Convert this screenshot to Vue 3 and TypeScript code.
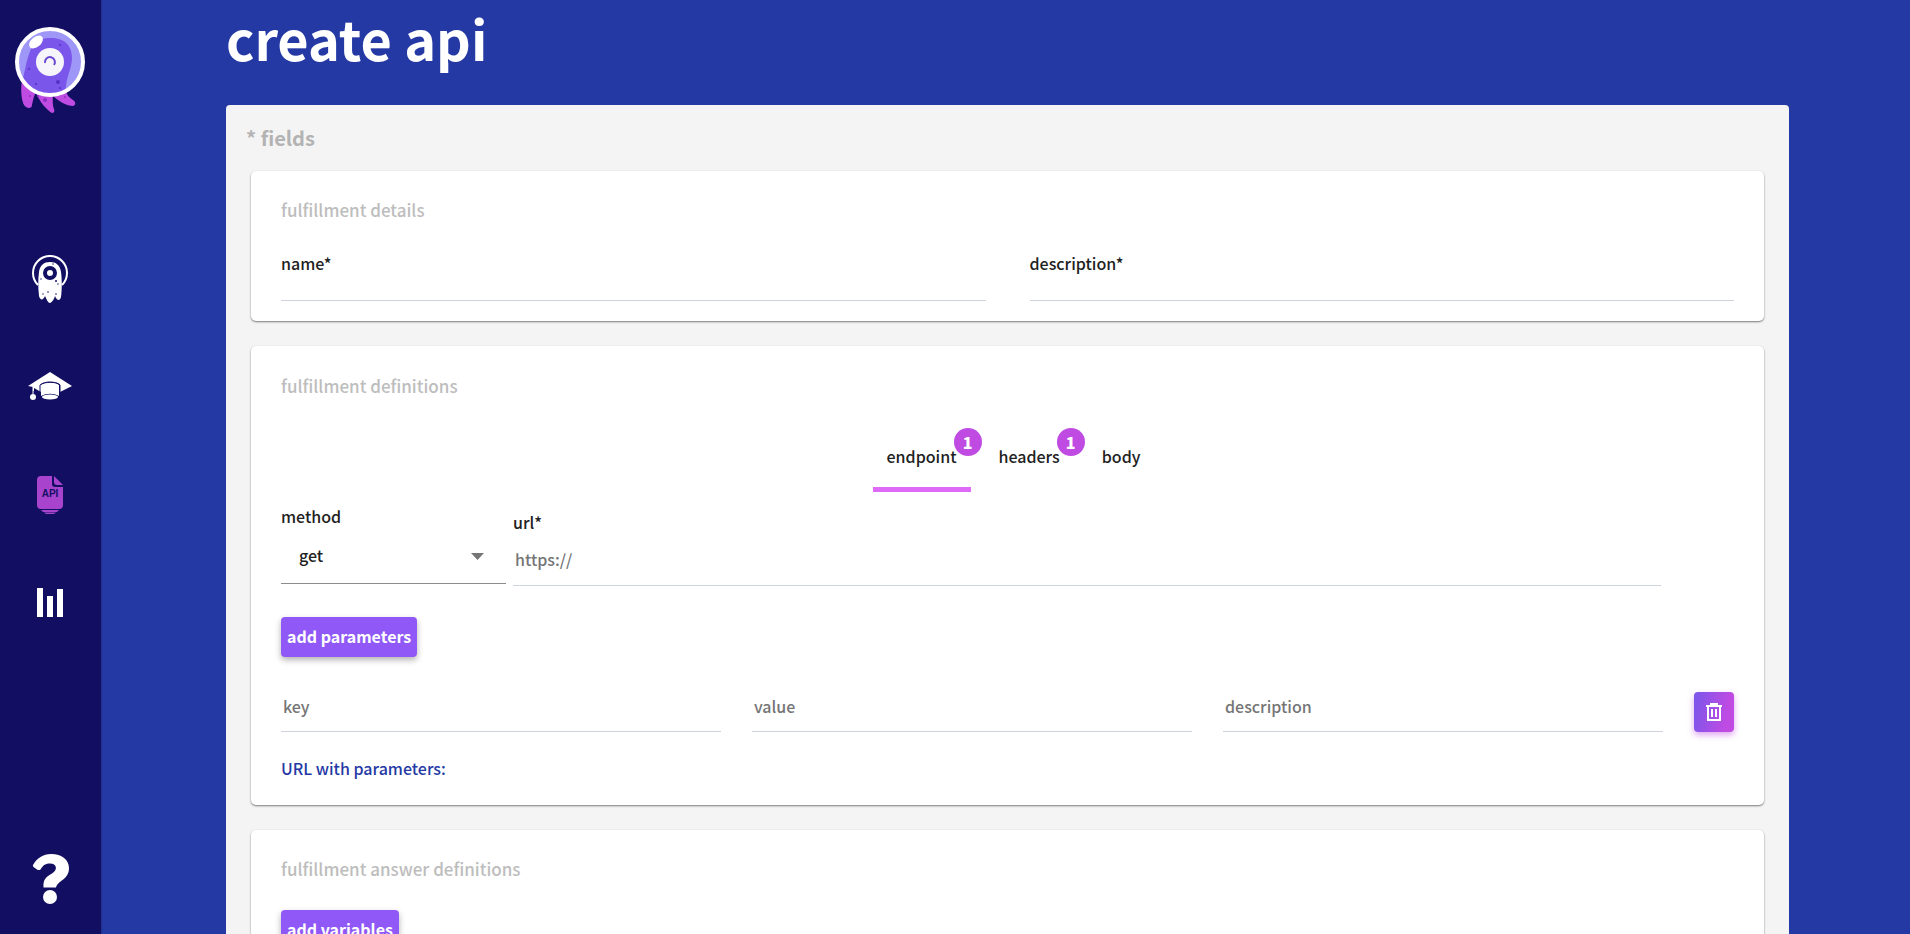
<script setup lang="ts">
import { ref } from 'vue'

interface Tab {
  id: string
  label: string
  count?: number
}

const tabs: Tab[] = [
  { id: 'endpoint', label: 'endpoint', count: 1 },
  { id: 'headers', label: 'headers', count: 1 },
  { id: 'body', label: 'body' },
]

const activeTab = ref('endpoint')
const name = ref('')
const description = ref('')
const method = ref('get')
const url = ref('')
const methods = ['get', 'post', 'put', 'patch', 'delete']

interface Param {
  key: string
  value: string
  description: string
}
const params = ref<Param[]>([{ key: '', value: '', description: '' }])
const columns: (keyof Param)[] = ['key', 'value', 'description']

function addParam() {
  params.value.push({ key: '', value: '', description: '' })
}
function removeParam(index: number) {
  params.value.splice(index, 1)
}
</script>

<template>
  <div class="layout">
    <aside class="sidebar">
      <a href="#" class="logo" aria-label="home">
        <svg width="74" height="90" viewBox="0 0 74 90">
          <path d="M9 56C7 68 9 81 13 83C16 85 19 84 19 81C20 76 21 71 24 66Z" fill="#bf4be3" />
          <path d="M22 66C26 78 34 86 39 89C41 89 42 87 41 85C39 80 40 74 40 66Z" fill="#bf4be3" />
          <path d="M38 70C46 78 54 82 60 82C63 81 63 78 60 76C56 73 54 72 53 66Z" fill="#bf4be3" />
          <g fill="#8e2fc4"><circle cx="17" cy="72" r="1" /><circle cx="32" cy="76" r="2" /><circle cx="52" cy="73" r="1" /><circle cx="25" cy="72" r="1" /></g>
          <circle cx="37" cy="38" r="34" fill="#9f97f7" />
          <path d="M9 57C12 49 13 36 18 25C22 16 29 14 38 14C50 14 59 20 59 34C59 45 52 54 53 68C42 75 20 72 9 57Z" fill="#7a56ea" />
          <circle cx="37" cy="38" r="33" fill="none" stroke="#fff" stroke-width="4" />
          <circle cx="37" cy="38" r="14" fill="#f6f5fb" />
          <path d="M32 39A5 5 0 1 1 41 41" fill="none" stroke="#6a48d2" stroke-width="2" />
          <ellipse cx="23" cy="18" rx="8" ry="5" transform="rotate(-40 23 18)" fill="#fff" />
          <g fill="#5730c5"><circle cx="47" cy="21" r="1" /><circle cx="16" cy="45" r="1" /><circle cx="23" cy="60" r="1" /><circle cx="45" cy="58" r="2" /><circle cx="47" cy="64" r="1" /></g>
        </svg>
      </a>
      <nav class="nav">
        <a href="#" class="nav-link" aria-label="bots">
          <svg width="48" height="48" viewBox="0 0 48 48">
            <path d="M12 30A17 17 0 1 1 36 30" fill="none" stroke="#fff" stroke-width="2" />
            <path d="M13 17C14 10 18 7 24 7C30 7 34 10 35 17C36 24 36 34 35 42C34 46 31 46 29 41C28 45 25 48 24 48C22 48 21 45 19 41C17 46 14 45 13 41C12 32 12 24 13 17Z" fill="#fff" />
            <circle cx="24" cy="18" r="5" fill="#fff" stroke="#120f63" stroke-width="4" />
            <g fill="#120f63"><circle cx="27" cy="9" r=".7" /><circle cx="30" cy="26" r="1" /><circle cx="15" cy="24" r=".7" /><circle cx="22" cy="37" r=".8" /><circle cx="17" cy="39" r=".7" /><circle cx="32" cy="29" r=".7" /><circle cx="30" cy="39" r=".8" /></g>
          </svg>
        </a>
        <a href="#" class="nav-link" aria-label="training">
          <svg width="48" height="48" viewBox="0 0 48 48">
            <path d="M24 9L46 23L34 29V22C34 18 15 18 15 22V29L8 25V28H7V24L2 23Z" fill="#fff" />
            <path d="M15 22C19 19 30 19 33 22V33C27 30 21 30 15 33Z" fill="#fff" />
            <path d="M14 34V22C18 18 30 18 34 22V34" fill="none" stroke="#120f63" stroke-width="1" />
            <ellipse cx="24" cy="34" rx="8" ry="2.5" fill="#fff" />
            <path d="M7 24V31" stroke="#fff" stroke-width="1" />
            <circle cx="7" cy="34" r="3" fill="#fff" />
          </svg>
        </a>
        <a href="#" class="nav-link" aria-label="api">
          <svg width="48" height="48" viewBox="0 0 48 48">
            <path d="M15 5H26V13Q26 16 29 16H37V34Q37 38 33 38H15Q11 38 11 34V9Q11 5 15 5Z" fill="#a743cc" />
            <path d="M28 5L37 14H31Q28 14 28 11Z" fill="#a743cc" />
            <path d="M15 39H33L31 41H17ZM18 41.5H30L28 43H20Z" fill="#a743cc" />
            <text x="24" y="26" text-anchor="middle" font-family="Liberation Sans, sans-serif" font-weight="700" font-size="10" fill="#120f63">API</text>
          </svg>
        </a>
        <a href="#" class="nav-link" aria-label="statistics">
          <svg width="48" height="48" viewBox="0 0 48 48" fill="#fff">
            <path d="M11 9H17V38H11ZM21 17H27V38H21ZM31 10H37V38H31Z" />
          </svg>
        </a>
      </nav>
      <a href="#" class="help" aria-label="help">
        <svg width="48" height="54" viewBox="0 0 48 54">
          <path d="M7 12C11 5 17 1 25 1C36 1 43 7 43 15C43 27 32 27 30 34.500H17.500C17 26 20 24 26 20.500C32 17 31 10.500 24 10.500C20 10.500 17 12 14.500 16.500Q12.500 17.500 11 16.500L7.500 14Q6.500 13 7 12Z" fill="#fff" />
          <circle cx="24" cy="44" r="7" fill="#fff" />
        </svg>
      </a>
    </aside>

    <main class="main">
      <h1 class="title">create api</h1>
      <form class="panel" @submit.prevent>
        <h2 class="panel-title">* fields</h2>

        <section class="card">
          <h3 class="card-title">fulfillment details</h3>
          <div class="details">
            <div class="field">
              <label for="name">name*</label>
              <input id="name" v-model="name" type="text" />
            </div>
            <div class="field">
              <label for="description">description*</label>
              <input id="description" v-model="description" type="text" />
            </div>
          </div>
        </section>

        <section class="card definitions">
          <h3 class="card-title">fulfillment definitions</h3>
          <div class="tabs" role="tablist">
            <button
              v-for="tab in tabs"
              :key="tab.id"
              type="button"
              role="tab"
              class="tab"
              :class="{ active: tab.id === activeTab }"
              :aria-selected="tab.id === activeTab"
              @click="activeTab = tab.id"
            >
              {{ tab.label }}
              <span v-if="tab.count" class="badge">{{ tab.count }}</span>
            </button>
          </div>

          <div class="request">
            <div class="method">
              <label for="method">method</label>
              <div class="select-wrap">
                <select id="method" v-model="method">
                  <option v-for="m in methods" :key="m" :value="m">{{ m }}</option>
                </select>
                <svg class="arrow" width="13" height="7" viewBox="0 0 13 7"><path d="M0 0H13L6.500 7Z" fill="#757575" /></svg>
              </div>
            </div>
            <div class="field url">
              <label for="url">url*</label>
              <input id="url" v-model="url" type="text" placeholder="https://" />
            </div>
          </div>

          <button type="button" class="btn" @click="addParam">add parameters</button>

          <div v-for="(param, i) in params" :key="i" class="param">
            <input
              v-for="col in columns"
              :key="col"
              v-model="param[col]"
              type="text"
              :placeholder="col"
              :aria-label="col"
            />
            <button type="button" class="delete" aria-label="delete" @click="removeParam(i)">
              <svg width="18" height="20" viewBox="0 0 18 20">
                <path d="M1 4H17M6 4V2H12V4M3 4V18H15V4M7 7V15M11 7V15" fill="none" stroke="#fff" stroke-width="2" />
              </svg>
            </button>
          </div>

          <p class="result">URL with parameters:</p>
        </section>

        <section class="card">
          <h3 class="card-title">fulfillment answer definitions</h3>
          <button type="button" class="btn">add variables</button>
        </section>
      </form>
    </main>
  </div>
</template>

<style>
body {
  margin: 0;
  background: #2539a5;
}
</style>

<style scoped>
.layout,
.layout * {
  box-sizing: border-box;
}
.layout {
  display: flex;
  height: 100vh;
  overflow: hidden;
  background: #2539a5;
  color: #212121;
  font-family: "Noto Sans CJK JP", "Noto Sans CJK SC", sans-serif;
  font-size: 16px;
  font-weight: 500;
  line-height: 24px;
}
button,
input,
select {
  font: inherit;
  color: inherit;
}
h1,
h2,
h3,
p {
  margin: 0;
}
.sidebar {
  flex: none;
  width: 101px;
  display: flex;
  flex-direction: column;
  align-items: center;
  padding: 24px 1px 27px 0;
  background: #120f63;
  box-shadow: 0 0 2px rgba(0, 0, 0, 0.4);
}
.sidebar a,
.sidebar svg {
  display: block;
}
.nav {
  display: flex;
  flex-direction: column;
  gap: 60px;
  margin-top: 141px;
}
.help {
  margin-top: auto;
}
.main {
  flex: 1;
  min-width: 0;
  padding: 0 121px 0 125px;
  overflow-y: auto;
  scrollbar-width: none;
}
.title {
  color: #fff;
  font-size: 54px;
  font-weight: 700;
  line-height: 76px;
}
.panel {
  margin-top: 29px;
  padding: 20px 25px;
  border-radius: 4px;
  background: #f4f4f4;
}
.panel-title {
  margin: 0 -5px 20px;
  color: #b3b3b3;
  font-size: 20px;
  font-weight: 700;
  line-height: 26px;
}
.card {
  margin-bottom: 25px;
  padding: 24px 30px 20px;
  border-radius: 5px;
  background: #fff;
  box-shadow: 0 1px 2px rgba(0, 0, 0, 0.5);
}
.card-title {
  margin-bottom: 26px;
  color: #bdbdbd;
  font-size: 17px;
  font-weight: 500;
  line-height: 30px;
}
.details {
  display: grid;
  grid-template-columns: 1fr 1fr;
  gap: 44px;
}
.field {
  display: flex;
  flex-direction: column;
}
input {
  width: 100%;
  min-width: 0;
  height: 26px;
  padding: 0 2px;
  border: 0;
  border-bottom: 1px solid #ced4da;
  background: transparent;
  outline: none;
}
input::placeholder {
  color: #757575;
  opacity: 1;
}
.definitions {
  padding-top: 25px;
  padding-bottom: 25px;
}
.tabs {
  display: flex;
  justify-content: center;
  gap: 14px;
  margin-bottom: 12px;
  padding-left: 12px;
}
.tab {
  position: relative;
  height: 65px;
  padding: 0 14px 3px;
  border: 0;
  border-bottom: 5px solid transparent;
  background: none;
}
.tab.active {
  border-bottom-color: #e06af8;
}
.badge {
  position: absolute;
  top: 1px;
  right: -11px;
  width: 28px;
  height: 28px;
  border-radius: 50%;
  background: #bf4be3;
  color: #fff;
  font-weight: 900;
  line-height: 28px;
}
.request {
  display: grid;
  grid-template-columns: 225px 1fr;
  gap: 7px;
  margin-bottom: 31px;
  padding-right: 73px;
}
.method label {
  display: block;
}
.select-wrap {
  position: relative;
}
select {
  display: block;
  width: 100%;
  height: 56px;
  padding: 0 18px 2px;
  border: 0;
  border-bottom: 1px solid #8c8c8c;
  appearance: none;
  background: transparent;
}
.arrow {
  position: absolute;
  top: 25px;
  right: 22px;
}
.url {
  padding-top: 6px;
}
.url input {
  height: 52px;
  padding-bottom: 2px;
}
.btn {
  display: block;
  height: 40px;
  padding: 0 6px 2px;
  border: 0;
  border-radius: 4px;
  background: #9059f7;
  box-shadow: 0 3px 6px rgba(0, 0, 0, 0.3);
  color: #fff;
  font-weight: 700;
}
.param {
  display: grid;
  grid-template-columns: 1fr 1fr 1fr 40px;
  gap: 31px;
  margin: 35px 0 24px;
}
.param input {
  height: 40px;
  padding-bottom: 12px;
}
.delete {
  display: flex;
  align-items: center;
  justify-content: center;
  height: 40px;
  padding: 0;
  border: 0;
  border-radius: 4px;
  background: linear-gradient(100deg, #7a56ea, #bf4be3 80%);
  box-shadow: 0 3px 6px rgba(191, 75, 227, 0.5);
}
.result {
  color: #2539a5;
}
</style>
